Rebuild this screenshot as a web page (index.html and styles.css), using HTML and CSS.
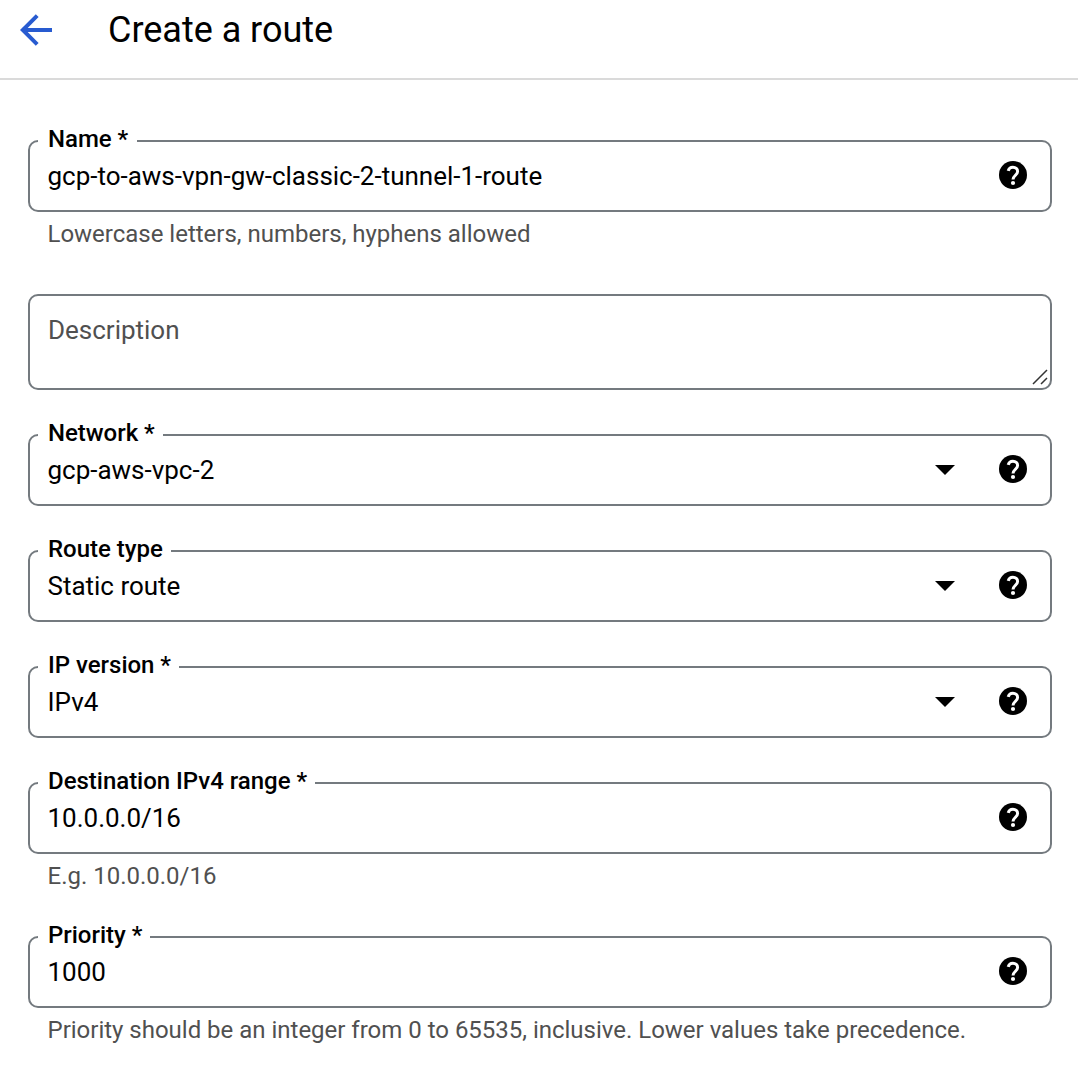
FILE: index.html
```html
<!DOCTYPE html>
<html lang="en">
<head>
<meta charset="utf-8">
<title>Create a route</title>
<link rel="stylesheet" href="styles.css">
</head>
<body>
<svg class="defs" aria-hidden="true">
  <symbol id="help" viewBox="0 0 28 28">
    <circle cx="14" cy="14" r="14"/>
    <path d="M9.200 9.900C9.800 7.600 11.500 6.300 13.900 6.300c2.800 0 4.700 1.700 4.700 4.200 0 3.500-4.600 4.100-4.600 8.100" fill="none" stroke="#fff" stroke-width="3"/>
    <circle cx="14" cy="22" r="2.100" fill="#fff"/>
  </symbol>
  <symbol id="caret" viewBox="0 0 20 10"><path d="M0 0h20L10 10z"/></symbol>
</svg>
<header class="header">
  <svg class="back" viewBox="0 0 32 32" fill="none" stroke="#285bd0" stroke-width="4"><path d="M32 16H4M17.200 1.600 2.800 16l14.400 14.400"/></svg>
  <h1 class="title">Create a route</h1>
</header>
<main class="form">
  <section class="field name">
    <div class="box"><span class="label">Name *</span><span class="value">gcp-to-aws-vpn-gw-classic-2-tunnel-1-route</span><svg class="help"><use href="#help"/></svg></div>
    <p class="hint">Lowercase letters, numbers, hyphens allowed</p>
  </section>
  <section class="field">
    <div class="box area"><span class="value">Description</span>
      <svg class="grip" viewBox="0 0 16 16" fill="none" stroke="#333" stroke-width="1.500"><path d="M1 15 15 1M9 15l6-6"/></svg></div>
  </section>
  <section class="field">
    <div class="box"><span class="label">Network *</span><span class="value">gcp-aws-vpc-2</span><svg class="caret"><use href="#caret"/></svg><svg class="help"><use href="#help"/></svg></div>
  </section>
  <section class="field">
    <div class="box"><span class="label">Route type</span><span class="value">Static route</span><svg class="caret"><use href="#caret"/></svg><svg class="help"><use href="#help"/></svg></div>
  </section>
  <section class="field">
    <div class="box"><span class="label">IP version *</span><span class="value">IPv4</span><svg class="caret"><use href="#caret"/></svg><svg class="help"><use href="#help"/></svg></div>
  </section>
  <section class="field range">
    <div class="box"><span class="label">Destination IPv4 range *</span><span class="value">10.0.0.0/16</span><svg class="help"><use href="#help"/></svg></div>
    <p class="hint">E.g. 10.0.0.0/16</p>
  </section>
  <section class="field">
    <div class="box"><span class="label">Priority *</span><span class="value">1000</span><svg class="help"><use href="#help"/></svg></div>
    <p class="hint">Priority should be an integer from 0 to 65535, inclusive. Lower values take precedence.</p>
  </section>
</main>
</body>
</html>
```
FILE: styles.css
```css
* { box-sizing: border-box; }
body { margin: 0; background: #fff; color: #000; font-family: Roboto, sans-serif; }
.defs { display: none; }
.header { display: flex; align-items: center; height: 80px; padding: 0 20px 18px; border-bottom: 2px solid #dadada; }
.back { width: 32px; height: 32px; }
.title { margin: 0 0 0 56px; font-size: 36px; font-weight: 400; line-height: 44px; letter-spacing: -0.02px; }
.form { display: flex; flex-direction: column; gap: 44px; padding: 60px 26px 0 28px; }
.box { position: relative; display: flex; align-items: center; height: 72px; padding: 0 23px 2px 17.5px; border: 2px solid #747a7f; border-radius: 10px; }
.label { position: absolute; left: 8px; top: -18px; padding: 0 8px 0 10px; background: #fff; font-size: 24px; font-weight: 500; line-height: 30px; letter-spacing: -0.02px; white-space: nowrap; }
.value { flex: 1; padding-top: 2px; font-size: 26px; line-height: 32px; letter-spacing: -0.01px; white-space: nowrap; }
.help { width: 28px; height: 28px; }
.caret { width: 20px; height: 10px; margin: 2px 44px 0 0; }
.hint { margin: 8px 0 0 19.5px; color: #505050; font-size: 24px; line-height: 28px; letter-spacing: -0.01px; white-space: nowrap; }
.name { height: 110px; }
.name .label { padding-right: 9px; }
.range { height: 110px; }
.area { height: 96px; align-items: flex-start; padding: 16px 23px 2px 18px; }
.area .value { color: #505050; }
.grip { position: absolute; right: 2px; bottom: 3px; width: 16px; height: 16px; }
```
